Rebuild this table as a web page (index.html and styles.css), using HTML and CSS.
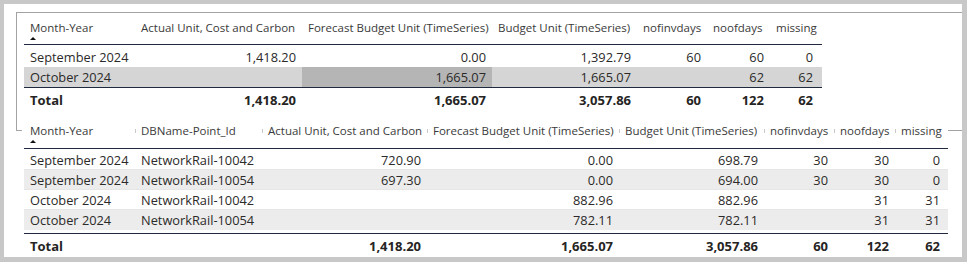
FILE: index.html
```html
<!DOCTYPE html>
<html>
<head>
<meta charset="utf-8">
<link rel="stylesheet" href="styles.css">
</head>
<body>
<div class="panel">
  <div class="v1">
    <div class="tbl t1">
      <div class="row head">
        <div class="cell c1 l"><span>Month-Year</span><i class="sort"></i></div>
        <div class="cell c2 l"><span>Actual Unit, Cost and Carbon</span></div>
        <div class="cell c3 l"><span>Forecast Budget Unit (TimeSeries)</span></div>
        <div class="cell c4 l"><span>Budget Unit (TimeSeries)</span></div>
        <div class="cell c5 l"><span>nofinvdays</span></div>
        <div class="cell c6 l"><span>noofdays</span></div>
        <div class="cell c7 l"><span>missing</span></div>
      </div>
      <div class="body">
        <div class="row">
          <div class="cell c1 l">September 2024</div>
          <div class="cell c2">1,418.20</div>
          <div class="cell c3">0.00</div>
          <div class="cell c4">1,392.79</div>
          <div class="cell c5">60</div>
          <div class="cell c6">60</div>
          <div class="cell c7">0</div>
        </div>
        <div class="row sel">
          <div class="cell c1 l">October 2024</div>
          <div class="cell c2"></div>
          <div class="cell c3 hl">1,665.07</div>
          <div class="cell c4">1,665.07</div>
          <div class="cell c5"></div>
          <div class="cell c6">62</div>
          <div class="cell c7">62</div>
        </div>
      </div>
      <div class="row total">
        <div class="cell c1 l">Total</div>
        <div class="cell c2">1,418.20</div>
        <div class="cell c3">1,665.07</div>
        <div class="cell c4">3,057.86</div>
        <div class="cell c5">60</div>
        <div class="cell c6">122</div>
        <div class="cell c7">62</div>
      </div>
    </div>
  </div>
  <div class="v2">
    <div class="tbl t2">
      <div class="row head">
        <div class="cell c1 l"><span>Month-Year</span><i class="sort"></i></div>
        <div class="cell c2 l sep"><span>DBName-Point_Id</span></div>
        <div class="cell c3 l sep"><span>Actual Unit, Cost and Carbon</span></div>
        <div class="cell c4 l sep"><span>Forecast Budget Unit (TimeSeries)</span></div>
        <div class="cell c5 l sep"><span>Budget Unit (TimeSeries)</span></div>
        <div class="cell c6 l sep"><span>nofinvdays</span></div>
        <div class="cell c7 l sep"><span>noofdays</span></div>
        <div class="cell c8 l sep"><span>missing</span></div>
      </div>
      <div class="body">
        <div class="row">
          <div class="cell c1 l">September 2024</div>
          <div class="cell c2 l">NetworkRail-10042</div>
          <div class="cell c3">720.90</div>
          <div class="cell c4">0.00</div>
          <div class="cell c5">698.79</div>
          <div class="cell c6">30</div>
          <div class="cell c7">30</div>
          <div class="cell c8">0</div>
        </div>
        <div class="row alt">
          <div class="cell c1 l">September 2024</div>
          <div class="cell c2 l">NetworkRail-10054</div>
          <div class="cell c3">697.30</div>
          <div class="cell c4">0.00</div>
          <div class="cell c5">694.00</div>
          <div class="cell c6">30</div>
          <div class="cell c7">30</div>
          <div class="cell c8">0</div>
        </div>
        <div class="row">
          <div class="cell c1 l">October 2024</div>
          <div class="cell c2 l">NetworkRail-10042</div>
          <div class="cell c3"></div>
          <div class="cell c4">882.96</div>
          <div class="cell c5">882.96</div>
          <div class="cell c6"></div>
          <div class="cell c7">31</div>
          <div class="cell c8">31</div>
        </div>
        <div class="row alt">
          <div class="cell c1 l">October 2024</div>
          <div class="cell c2 l">NetworkRail-10054</div>
          <div class="cell c3"></div>
          <div class="cell c4">782.11</div>
          <div class="cell c5">782.11</div>
          <div class="cell c6"></div>
          <div class="cell c7">31</div>
          <div class="cell c8">31</div>
        </div>
      </div>
      <div class="row total">
        <div class="cell c1 l">Total</div>
        <div class="cell c2 l"></div>
        <div class="cell c3">1,418.20</div>
        <div class="cell c4">1,665.07</div>
        <div class="cell c5">3,057.86</div>
        <div class="cell c6">60</div>
        <div class="cell c7">122</div>
        <div class="cell c8">62</div>
      </div>
    </div>
  </div>
</div>
</body>
</html>
```

FILE: styles.css
```css
html, body {
  margin: 0;
  padding: 0;
}
body {
  background: #c8c8c8;
  width: 967px;
  height: 262px;
  overflow: hidden;
  font-family: "Open Sans", "Noto Sans", sans-serif;
  color: #252423;
}
.panel {
  margin: 4px;
  width: 958px;
  height: 253px;
  background: #fff;
  overflow: hidden;
  box-sizing: border-box;
  padding: 8px 0 0 12px;
}
.v1 {
  width: 960px;
  height: 117px;
  border: 1px solid #a3a3a3;
  padding-left: 7px;
}
.v2 {
  position: relative;
  margin-top: -15px;
  margin-left: 6px;
  width: 926px;
  height: 150px;
  background: #fff;
  padding: 1px 0 0 2px;
  box-sizing: border-box;
}
.tbl {
  display: flex;
  flex-direction: column;
}
.t1 { width: 798px; }
.t2 { width: 924px; }
.row {
  display: flex;
  height: 20px;
  align-items: center;
  font-size: 12.8px;
  white-space: nowrap;
  color: #2b2a29;
}
.cell {
  box-sizing: border-box;
  padding: 0 6px;
  height: 100%;
  display: flex;
  align-items: center;
  justify-content: flex-end;
  flex: none;
}
.cell.l { justify-content: flex-start; }

.head {
  height: 31px;
  border-bottom: 1px solid #1f2a3f;
  align-items: stretch;
  font-size: 11.5px;
  color: #3a3a3a;
}
.head .cell {
  flex-direction: column;
  align-items: flex-start;
  justify-content: flex-start;
  padding-top: 7px;
  line-height: 15px;
}
.t2 .head .cell { padding-top: 6px; }
.sort {
  display: block;
  width: 0;
  height: 0;
  margin-top: 2px;
  border-left: 3px solid transparent;
  border-right: 3px solid transparent;
  border-bottom: 3px solid #111;
}
.sep {
  background: linear-gradient(#c9c9c9, #c9c9c9) no-repeat 0 12px / 1px 4px;
}

.t1 .body { padding-top: 2px; }
.t2 .body { padding-top: 1px; padding-bottom: 3px; }

.sel { background: #d5d5d5; }
.hl { background: #b5b5b5; }
.alt { background: #ececec; }
.t2 .body .row { border-bottom: 1px solid #e6e6e6; box-sizing: border-box; }
.t2 .body .row:last-child { border-bottom: none; }

.total {
  height: 24px;
  border-top: 1px solid #1f2a3f;
  font-weight: 700;
  font-size: 13px;
  color: #252423;
}

/* column widths: top table */
.t1 .c1 { width: 111px; }
.t1 .c2 { width: 167px; }
.t1 .c3 { width: 190px; }
.t1 .c4 { width: 145px; }
.t1 .c5 { width: 70px; }
.t1 .c6 { width: 63px; }
.t1 .c7 { width: 52px; padding-right: 9px; }

/* column widths: bottom table */
.t2 .c1 { width: 111px; }
.t2 .c2 { width: 127px; }
.t2 .c3 { width: 165px; }
.t2 .c4 { width: 192px; }
.t2 .c5 { width: 145px; }
.t2 .c6 { width: 70px; }
.t2 .c7 { width: 61px; }
.t2 .c8 { width: 53px; padding-right: 8px; }
```
